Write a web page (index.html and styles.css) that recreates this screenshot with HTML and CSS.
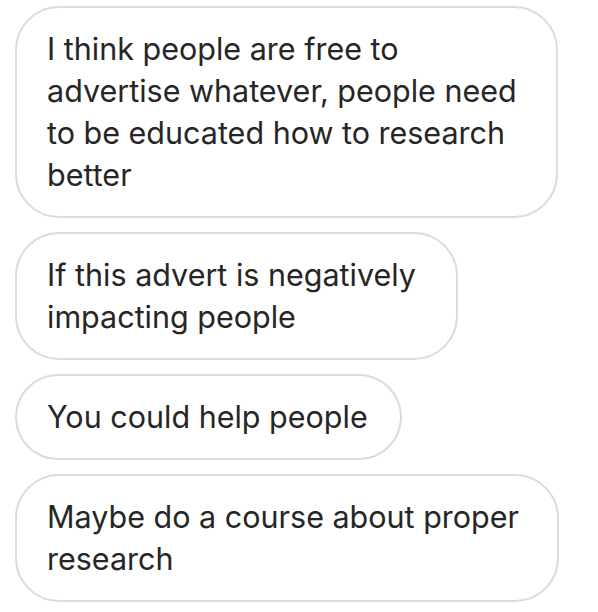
FILE: index.html
```html
<!DOCTYPE html>
<html lang="en">
<head>
    <meta charset="UTF-8">
    <meta name="viewport" content="width=device-width, initial-scale=1.0">
    <title>Messages</title>
    <link rel="stylesheet" href="styles.css">
</head>
<body>
    <div class="thread">
        <div class="bubble bubble-first">I think people are free to<br>advertise whatever, people need<br>to be educated how to research<br>better</div>
        <div class="bubble bubble-wide">If this advert is negatively<br>impacting people</div>
        <div class="bubble">You could help people</div>
        <div class="bubble bubble-full">Maybe do a course about proper<br>research</div>
    </div>
</body>
</html>
```

FILE: styles.css
```css
body {
    margin: 0;
    background: #ffffff;
    font-family: Inter, "Liberation Sans", Arial, sans-serif;
    color: #262626;
}
.thread {
    display: flex;
    flex-direction: column;
    align-items: flex-start;
    gap: 14px;
    padding: 6px 0 0 15px;
}
.bubble {
    box-sizing: border-box;
    border: 2px solid #dbdbdb;
    border-radius: 44px;
    padding: 20px 32px 20px 30px;
    font-size: 30.5px;
    line-height: 42px;
    white-space: nowrap;
}
.bubble-first {
    width: 543px;
}
.bubble-wide {
    padding-right: 40px;
}
.bubble-full {
    width: 544px;
}
```
